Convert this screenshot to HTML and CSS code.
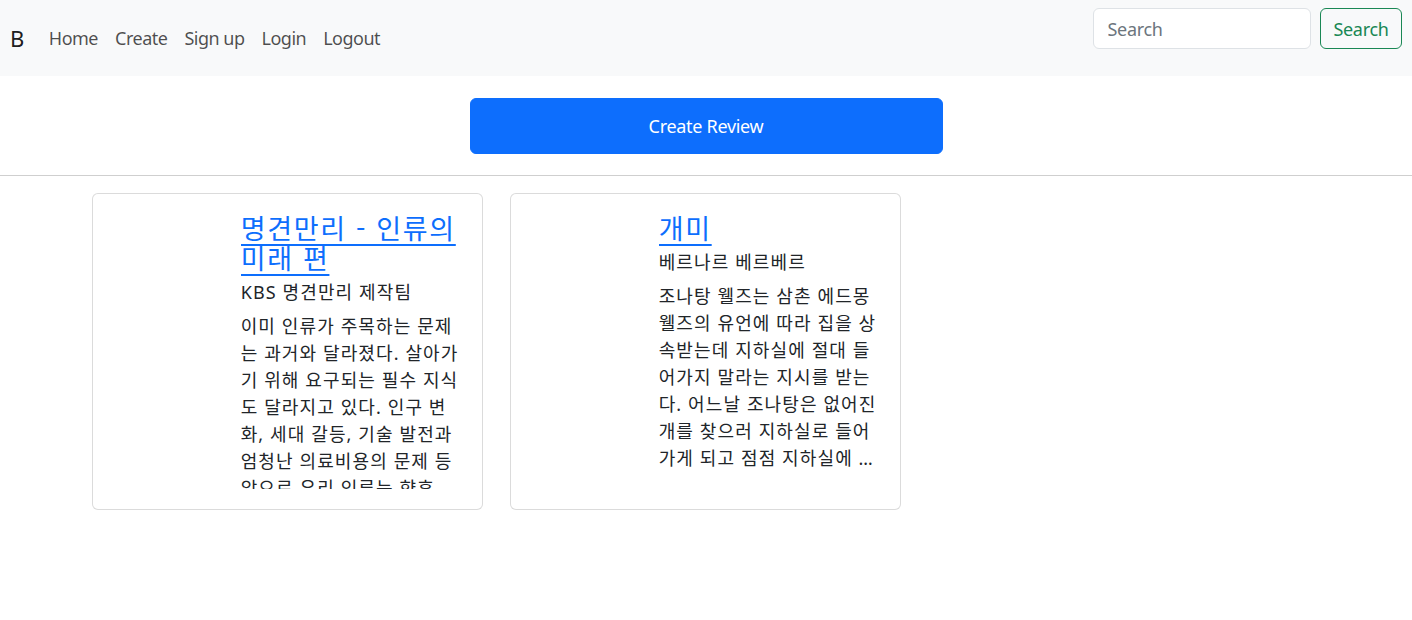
FILE: index.html
```html
<!DOCTYPE html>
<html lang="ko">
<head>
<meta charset="utf-8">
<title>Reviews</title>
<link rel="stylesheet" href="styles.css">
</head>
<body>
<nav class="navbar">
  <div class="nav-left">
    <a class="brand" href="#">B</a>
    <ul class="nav-links">
      <li><a href="#">Home</a></li>
      <li><a href="#">Create</a></li>
      <li><a href="#">Sign up</a></li>
      <li><a href="#">Login</a></li>
      <li><a href="#">Logout</a></li>
    </ul>
  </div>
  <form class="search-form">
    <input class="search-input" type="search" placeholder="Search">
    <button class="search-btn" type="button">Search</button>
  </form>
</nav>

<main>
  <div class="create-wrap">
    <a class="create-btn" href="#">Create Review</a>
  </div>
  <hr class="divider">
  <div class="cards">
    <div class="card">
      <div class="card-img"></div>
      <div class="card-body">
        <div class="clip">
          <a class="card-title" href="#">명견만리 - 인류의 미래 편</a>
          <p class="card-author">KBS 명견만리 제작팀</p>
          <p class="card-desc">이미 인류가 주목하는 문제는 과거와 달라졌다. 살아가기 위해 요구되는 필수 지식도 달라지고 있다. 인구 변화, 세대 갈등, 기술 발전과 엄청난 의료비용의 문제 등 앞으로 우리 인류는 향후 50년 동안 어떤 변화를 겪게 될 것인가에 대한 질문을 던진다.</p>
        </div>
      </div>
    </div>
    <div class="card">
      <div class="card-img"></div>
      <div class="card-body">
        <div class="clip">
          <a class="card-title" href="#">개미</a>
          <p class="card-author">베르나르 베르베르</p>
          <p class="card-desc">조나탕 웰즈는 삼촌 에드몽 웰즈의 유언에 따라 집을 상속받는데 지하실에 절대 들어가지 말라는 지시를 받는다. 어느날 조나탕은 없어진 개를 찾으러 지하실로 들어가게 되고 점점 지하실에 빠져들게 되는데 그곳에서 새로운 세계를 발견한다.</p>
        </div>
      </div>
    </div>
  </div>
</main>
</body>
</html>
```

FILE: styles.css
```css
* { box-sizing: border-box; }

html, body {
  margin: 0;
  padding: 0;
}

body {
  font-family: "Noto Sans", "Noto Sans CJK KR", sans-serif;
  font-size: 18px;
  line-height: 1.5;
  color: #212529;
  background: #fff;
}

a { text-decoration: none; }

/* Navbar */
.navbar {
  display: flex;
  justify-content: space-between;
  align-items: flex-start;
  height: 76px;
  padding: 8px 10px 0 10px;
  background: #f8f9fa;
}

.nav-left {
  display: flex;
  align-items: center;
  height: 60px;
}

.brand {
  font-size: 22px;
  line-height: 1.5;
  color: rgba(0, 0, 0, 0.9);
  margin-right: 16px;
}

.nav-links {
  display: flex;
  list-style: none;
  margin: 0;
  padding: 0;
}

.nav-links a {
  display: block;
  padding: 0 8.5px;
  font-size: 18px;
  line-height: 27px;
  letter-spacing: -0.5px;
  color: rgba(0, 0, 0, 0.7);
}

.search-form {
  display: flex;
  gap: 9px;
}

.search-input {
  width: 218px;
  height: 41px;
  padding: 0 13.5px;
  font-family: inherit;
  font-size: 18px;
  letter-spacing: -0.3px;
  color: #212529;
  background: #fff;
  border: 1px solid #dee2e6;
  border-radius: 6px;
  outline: none;
}

.search-input::placeholder { color: #6c757d; }

.search-btn {
  width: 82px;
  height: 41px;
  padding: 0;
  font-family: inherit;
  font-size: 18px;
  letter-spacing: -0.3px;
  color: #198754;
  background: transparent;
  border: 1px solid #198754;
  border-radius: 6px;
}

/* Create button */
.create-wrap {
  display: flex;
  justify-content: center;
  padding-top: 22px;
}

.create-btn {
  display: block;
  width: 473px;
  height: 56px;
  line-height: 54px;
  text-align: center;
  font-size: 18px;
  letter-spacing: -0.3px;
  color: #fff;
  background: #0d6efd;
  border: 1px solid #0d6efd;
  border-radius: 6px;
}

.divider {
  margin: 21px 0 17px 0;
  border: 0;
  border-top: 1px solid #cfcfcf;
}

/* Cards */
.cards {
  display: flex;
  gap: 27px;
  padding-left: 92px;
}

.card {
  display: flex;
  width: 391px;
  height: 317px;
  border: 1px solid rgba(0, 0, 0, 0.14);
  border-radius: 6px;
  background: #fff;
}

.card-img {
  flex: 0 0 129.67px;
}

.card-body {
  flex: 1;
  min-width: 0;
  padding: 19px 18px 0 18px;
}

.clip {
  height: 276px;
  overflow: hidden;
}

.card-title {
  display: block;
  font-family: "Noto Sans CJK KR", sans-serif;
  font-size: 27px;
  line-height: 30px;
  letter-spacing: 0.062em;
  color: #0d6efd;
  text-decoration: underline;
  text-underline-offset: 5px;
  text-decoration-thickness: 2px;
  margin-bottom: 6px;
}

.card-author {
  margin: 0 0 7px 0;
  font-size: 18px;
  line-height: 27px;
  letter-spacing: 0.062em;
}

.card-desc {
  margin: 0;
  font-size: 18px;
  line-height: 27px;
  letter-spacing: 0.062em;
  word-break: break-all;
  display: -webkit-box;
  -webkit-box-orient: vertical;
  -webkit-line-clamp: 7;
  overflow: hidden;
}
```
